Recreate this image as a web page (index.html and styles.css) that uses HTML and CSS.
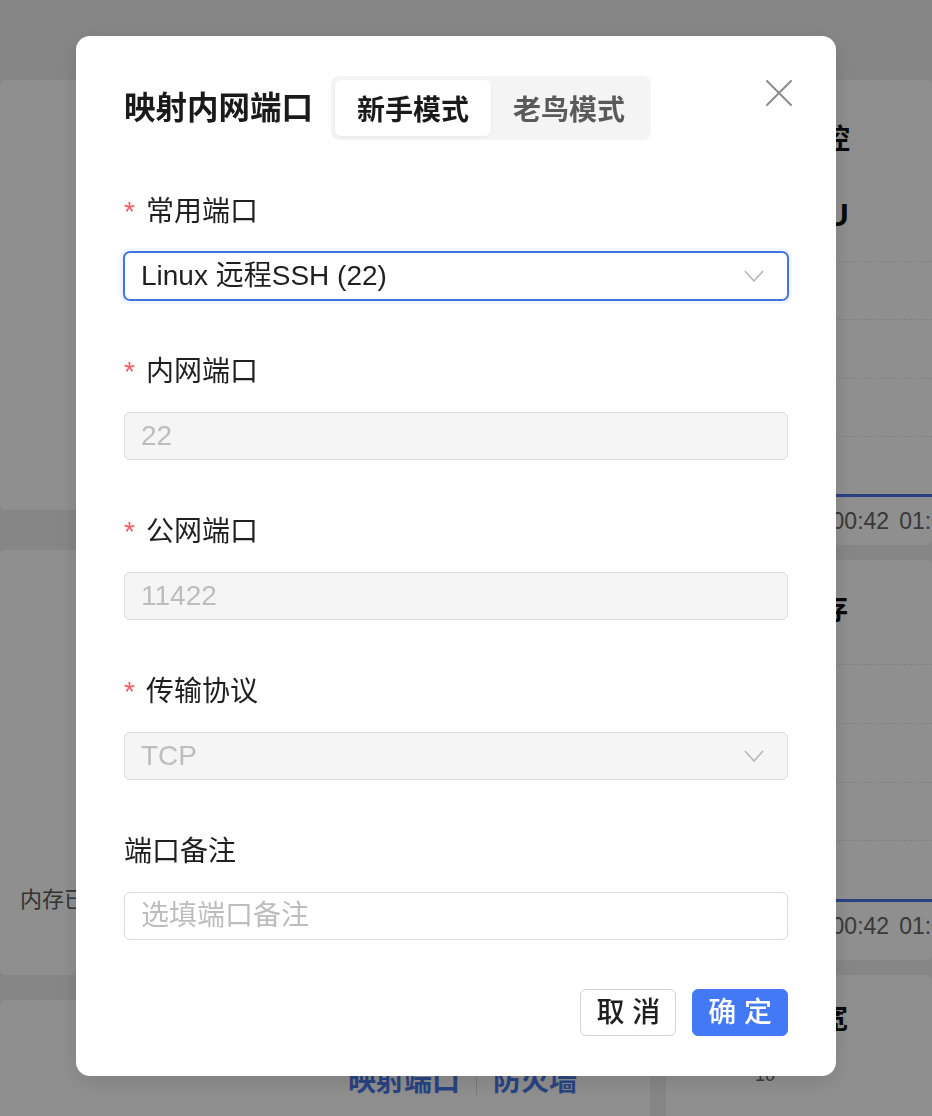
FILE: index.html
```html
<!DOCTYPE html>
<html lang="zh-CN">
<head>
<meta charset="utf-8">
<title>映射内网端口</title>
<link rel="stylesheet" href="styles.css">
</head>
<body>
<div class="page">
  <div class="col-left">
    <section class="card card-a"></section>
    <section class="card card-b"><p class="mem-text">内存已使用 45%</p></section>
    <section class="card card-c">
      <div class="links"><a class="link">映射端口</a><span class="sep"></span><a class="link">防火墙</a></div>
    </section>
  </div>
  <div class="col-right">
    <section class="card rcard r1">
      <h3 class="rtitle">主机监控</h3>
      <div class="rsub">CPU</div>
      <div class="chart">
        <div class="grid"></div><div class="grid"></div><div class="grid"></div><div class="grid"></div>
        <div class="line"></div>
      </div>
      <div class="axis"><span>00:24</span><span>00:42</span><span>01:00</span></div>
    </section>
    <section class="card rcard r2">
      <h3 class="rtitle">内存</h3>
      <div class="chart chart2">
        <div class="grid"></div><div class="grid"></div><div class="grid"></div><div class="grid"></div>
        <div class="line"></div>
      </div>
      <div class="axis"><span>00:24</span><span>00:42</span><span>01:00</span></div>
    </section>
    <section class="card rcard r3">
      <h3 class="rtitle">带宽</h3>
      <div class="ylabel">10</div>
    </section>
  </div>
</div>

<div class="mask">
  <div class="modal">
    <button class="close" aria-label="关闭">
      <svg width="26" height="26" viewBox="0 0 26 26"><path d="M1 1 L25 25 M25 1 L1 25" stroke="#8c8c8c" stroke-width="2" fill="none" stroke-linecap="round"/></svg>
    </button>
    <div class="header">
      <h2 class="title">映射内网端口</h2>
      <div class="segment">
        <span class="seg-item active">新手模式</span>
        <span class="seg-item">老鸟模式</span>
      </div>
    </div>

    <div class="form">
      <div class="item">
        <div class="label"><span class="req">*</span>常用端口</div>
        <div class="control focus">
          <span class="value">Linux 远程SSH (22)</span>
          <svg class="chev" width="20" height="12" viewBox="0 0 20 12"><path d="M1 1 L10 11 L19 1" stroke="#b4b4b4" stroke-width="1.5" fill="none"/></svg>
        </div>
      </div>
      <div class="item">
        <div class="label"><span class="req">*</span>内网端口</div>
        <div class="control disabled"><span class="value">22</span></div>
      </div>
      <div class="item">
        <div class="label"><span class="req">*</span>公网端口</div>
        <div class="control disabled"><span class="value">11422</span></div>
      </div>
      <div class="item">
        <div class="label"><span class="req">*</span>传输协议</div>
        <div class="control disabled">
          <span class="value">TCP</span>
          <svg class="chev" width="20" height="12" viewBox="0 0 20 12"><path d="M1 1 L10 11 L19 1" stroke="#b4b4b4" stroke-width="1.5" fill="none"/></svg>
        </div>
      </div>
      <div class="item last">
        <div class="label">端口备注</div>
        <div class="control"><span class="value placeholder">选填端口备注</span></div>
      </div>
    </div>

    <div class="footer">
      <button class="btn btn-cancel">取 消</button>
      <button class="btn btn-ok">确 定</button>
    </div>
  </div>
</div>
</body>
</html>
```

FILE: styles.css
```css
* { box-sizing: border-box; }
html, body { margin: 0; padding: 0; }
body {
  width: 932px;
  height: 1116px;
  overflow: hidden;
  background: #efefef;
  font-family: "Liberation Sans", "Noto Sans CJK SC", sans-serif;
  color: #1f1f1f;
}

/* background page */
.page {
  display: flex;
  gap: 16px;
  padding-top: 80px;
  width: 932px;
  height: 1116px;
  overflow: hidden;
}
.col-left {
  width: 650px;
  flex: none;
  display: flex;
  flex-direction: column;
}
.col-right {
  flex: 1;
  display: flex;
  flex-direction: column;
  gap: 15px;
  overflow: hidden;
}
.card {
  background: #ffffff;
  border-radius: 6px;
  flex: none;
}
.card-a { height: 430px; margin-bottom: 40px; }
.card-b {
  height: 425px;
  margin-bottom: 25px;
  display: flex;
  flex-direction: column;
  justify-content: flex-end;
  padding: 0 0 62px 20px;
}
.mem-text {
  margin: 0;
  font-size: 22px;
  line-height: 26px;
  color: #5a5a5a;
  white-space: nowrap;
}
.card-c { height: 200px; padding: 66px 0 0 348px; }
.links { display: flex; align-items: center; gap: 16px; }
.link {
  font-size: 28px;
  line-height: 32px;
  font-weight: 700;
  color: #4a78e8;
}
.sep { width: 1px; height: 26px; background: #d8d8d8; }

.rcard { padding-left: 72px; }
.r1 { height: 465px; padding-top: 44px; }
.r2 { height: 400px; padding-top: 34px; }
.r3 { height: 200px; padding-top: 29px; }
.rtitle {
  margin: 0;
  font-size: 28px;
  line-height: 32px;
  font-weight: 700;
  color: #111;
  white-space: nowrap;
}
.r1 .rtitle { margin-left: 0; }
.r2 .rtitle { margin-left: 54px; }
.r3 .rtitle { margin-left: 54px; }
.rsub {
  margin-top: 41px;
  margin-left: 43px;
  font-size: 32px;
  line-height: 36px;
  font-weight: 700;
  color: #111;
}
.chart {
  margin-top: 28px;
  height: 236px;
  display: flex;
  flex-direction: column;
  justify-content: space-between;
}
.chart2 { margin-top: 38px; height: 238px; }
.grid { border-top: 1px dashed #e6e6e6; height: 0; }
.line { height: 3px; background: #4c74e6; }
.axis {
  margin-top: 11px;
  display: flex;
  gap: 10px;
  font-size: 23px;
  line-height: 26px;
  color: #666;
  white-space: nowrap;
  margin-left: 26px;
}
.ylabel {
  margin-top: 28px;
  margin-left: 17px;
  font-size: 18px;
  line-height: 22px;
  color: #666;
}

/* mask + modal */
.mask {
  position: fixed;
  inset: 0;
  background: rgba(0, 0, 0, 0.44);
  display: flex;
  align-items: flex-start;
  padding: 36px 0 0 76px;
}
.modal {
  position: relative;
  width: 760px;
  background: #ffffff;
  border-radius: 14px;
  padding: 40px 48px 40px;
  box-shadow: 0 6px 24px rgba(0, 0, 0, 0.12);
}
.close {
  position: absolute;
  top: 44px;
  right: 44px;
  width: 26px;
  height: 26px;
  padding: 0;
  border: 0;
  background: none;
  display: block;
}
.close svg { display: block; }
.header {
  display: flex;
  align-items: center;
  gap: 18px;
  height: 64px;
}
.title {
  margin: 0;
  font-size: 31.5px;
  line-height: 40px;
  font-weight: 700;
  color: #1a1a1a;
  white-space: nowrap;
}
.segment {
  display: flex;
  background: #f4f4f5;
  border-radius: 8px;
  padding: 4px;
  height: 64px;
}
.seg-item {
  width: 156px;
  height: 56px;
  display: flex;
  align-items: center;
  justify-content: center;
  font-size: 28px;
  font-weight: 700;
  color: #5a5a5a;
  border-radius: 6px;
}
.seg-item.active {
  background: #ffffff;
  color: #1a1a1a;
  box-shadow: 0 1px 3px rgba(0, 0, 0, 0.06);
}

.form { margin-top: 56px; }
.item { margin-bottom: 56px; }
.item.last { margin-bottom: 49px; }
.label {
  font-size: 28px;
  line-height: 32px;
  color: #1f1f1f;
  margin-bottom: 24px;
  display: flex;
  align-items: flex-start;
}
.req {
  color: #f05c5c;
  margin-right: 11px;
  font-size: 28px;
  line-height: 32px;
}
.control {
  height: 48px;
  border: 1px solid #dcdcdc;
  border-radius: 6px;
  background: #ffffff;
  display: flex;
  align-items: center;
  padding: 0 23px 0 16px;
}
.control.focus {
  border-color: #4272dc;
  box-shadow: 0 0 0 1px #4272dc, 0 0 0 4px rgba(66, 114, 220, 0.08);
}
.control.disabled {
  background: #f5f5f5;
  border-color: #dedede;
}
.value {
  flex: 1;
  font-size: 28px;
  line-height: 32px;
  color: #1f1f1f;
  white-space: nowrap;
}
.control.disabled .value,
.value.placeholder { color: #bdbdbd; }
.chev { display: block; flex: none; }

.footer {
  display: flex;
  justify-content: flex-end;
  gap: 16px;
}
.btn {
  height: 47px;
  padding: 0 15px;
  border-radius: 6px;
  font-family: "Liberation Sans", "Noto Sans CJK SC", sans-serif;
  font-size: 28px;
  line-height: 32px;
  font-weight: 500;
  cursor: pointer;
}
.btn-cancel {
  background: #ffffff;
  border: 1px solid #d2d2d2;
  color: #1f1f1f;
}
.btn-ok {
  background: #4479f6;
  border: 1px solid #4479f6;
  color: #ffffff;
}
```
